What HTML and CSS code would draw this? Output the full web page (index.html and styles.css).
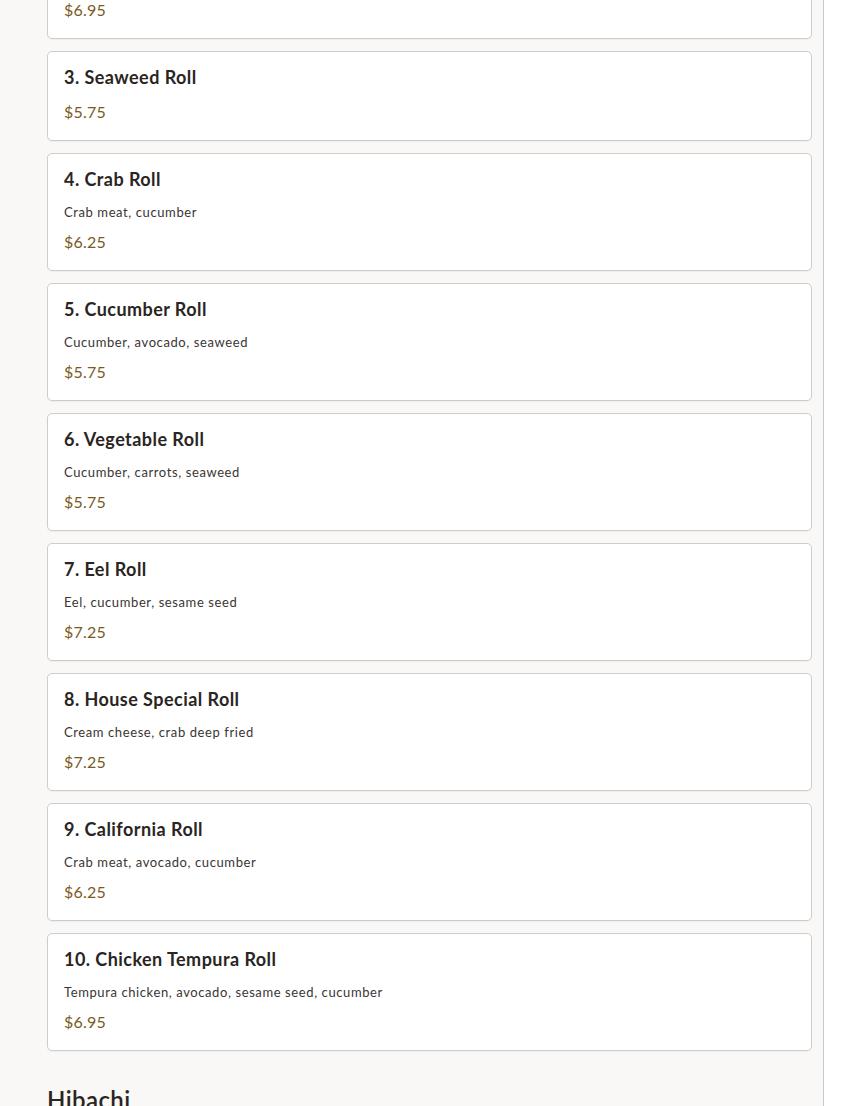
FILE: index.html
```html
<!DOCTYPE html>
<html lang="en">
<head>
<meta charset="utf-8">
<title>Menu</title>
<link rel="stylesheet" href="styles.css">
</head>
<body>
<div class="page">
  <main class="content">
    <section class="menu-section">
      <div class="item-list">
        <article class="item">
          <h3 class="item-name">2. Salmon Roll</h3>
          <p class="item-desc">Salmon, avocado</p>
          <p class="item-price">$6.95</p>
        </article>
        <article class="item">
          <h3 class="item-name">3. Seaweed Roll</h3>
          <p class="item-price">$5.75</p>
        </article>
        <article class="item">
          <h3 class="item-name">4. Crab Roll</h3>
          <p class="item-desc">Crab meat, cucumber</p>
          <p class="item-price">$6.25</p>
        </article>
        <article class="item">
          <h3 class="item-name">5. Cucumber Roll</h3>
          <p class="item-desc">Cucumber, avocado, seaweed</p>
          <p class="item-price">$5.75</p>
        </article>
        <article class="item">
          <h3 class="item-name">6. Vegetable Roll</h3>
          <p class="item-desc">Cucumber, carrots, seaweed</p>
          <p class="item-price">$5.75</p>
        </article>
        <article class="item">
          <h3 class="item-name">7. Eel Roll</h3>
          <p class="item-desc">Eel, cucumber, sesame seed</p>
          <p class="item-price">$7.25</p>
        </article>
        <article class="item">
          <h3 class="item-name">8. House Special Roll</h3>
          <p class="item-desc">Cream cheese, crab deep fried</p>
          <p class="item-price">$7.25</p>
        </article>
        <article class="item">
          <h3 class="item-name">9. California Roll</h3>
          <p class="item-desc">Crab meat, avocado, cucumber</p>
          <p class="item-price">$6.25</p>
        </article>
        <article class="item">
          <h3 class="item-name">10. Chicken Tempura Roll</h3>
          <p class="item-desc">Tempura chicken, avocado, sesame seed, cucumber</p>
          <p class="item-price">$6.95</p>
        </article>
      </div>
    </section>
    <section class="menu-section">
      <h2 class="section-title">Hibachi</h2>
    </section>
  </main>
</div>
</body>
</html>
```

FILE: styles.css
```css
html, body {
  margin: 0;
  padding: 0;
  background: #ffffff;
}

body {
  font-family: "Lato", "Noto Sans", sans-serif;
  color: #2a2522;
  overflow: hidden;
  height: 1106px;
}

.page {
  width: 824px;
  box-sizing: border-box;
  min-height: 1106px;
  background: #f9f8f6;
  border-right: 1px solid #c9c9c9;
}

.content {
  padding: 0 11px 0 47px;
  margin-top: -79px;
}

.item-list {
  display: flex;
  flex-direction: column;
  gap: 12px;
}

.item {
  background: #ffffff;
  border: 1px solid #cfcdcb;
  border-radius: 5px;
  padding: 16px;
  box-shadow: 0 1px 1px rgba(0, 0, 0, 0.04);
}

.item-name {
  margin: 0 0 13px;
  font-size: 18px;
  line-height: 18px;
  font-weight: 700;
  letter-spacing: 0.45px;
  color: #2a2522;
  padding-bottom: 1px;
}

.item-desc {
  margin: 0 0 8px;
  font-size: 13px;
  line-height: 20px;
  letter-spacing: 0.6px;
  color: #3a3533;
}

.item-price {
  margin: 0;
  font-size: 16px;
  line-height: 24px;
  letter-spacing: 0.2px;
  color: #7a5a1c;
}

.section-title {
  margin: 33px 0 0;
  font-size: 24px;
  line-height: 32px;
  font-weight: 600;
  letter-spacing: 0.4px;
  color: #2a2522;
}
```
